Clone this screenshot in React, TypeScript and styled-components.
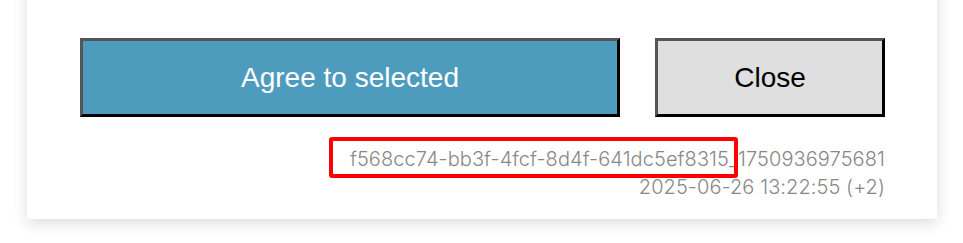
import * as React from 'react';
import styled, {createGlobalStyle} from 'styled-components';

const GlobalStyle = createGlobalStyle`
  html, body {
    margin: 0;
    padding: 0;
    background: #fff;
  }
`;

const Page = styled.div`
  width: 963px;
  height: 243px;
  overflow: hidden;
`;

const Card = styled.div`
  margin: -20px 0 0 27px;
  width: 910px;
  height: 239px;
  box-sizing: border-box;
  padding: 58px 52px 0 53px;
  background: #fff;
  box-shadow: 0 4px 14px rgba(0, 0, 0, 0.14);
`;

const Actions = styled.div`
  display: grid;
  grid-template-columns: 540px 230px;
  column-gap: 35px;
`;

// eslint-disable-next-line no-undef
const Button = styled.button<{primary?: boolean}>`
  height: 79px;
  box-sizing: border-box;
  border-style: solid;
  border-width: 3px;
  border-color: #555 #000 #000 #555;
  background: ${(props) => (props.primary ? '#4e9cbd' : '#dfdfdf')};
  color: ${(props) => (props.primary ? '#fff' : '#000')};
  font-family: "Liberation Sans", Arial, sans-serif;
  font-size: 28px;
  cursor: pointer;
`;

const Meta = styled.div`
  margin-top: 28px;
  text-align: right;
  font-family: Inter, "Noto Sans", sans-serif;
  font-weight: 300;
  font-size: 20px;
  letter-spacing: 0.08px;
  line-height: 28px;
  color: #888;
`;

const Highlight = styled.span`
  position: relative;

  &::after {
    content: '';
    position: absolute;
    left: -21px;
    right: 0;
    top: -10px;
    bottom: -7px;
    border: 4px solid #ff0000;
    border-radius: 3px;
  }
`;

export default function App() {
  return (
    <Page>
      <GlobalStyle />
      <Card>
        <Actions>
          <Button primary>Agree to selected</Button>
          <Button>Close</Button>
        </Actions>
        <Meta>
          <div>
            <Highlight>f568cc74-bb3f-4fcf-8d4f-641dc5ef8315_</Highlight>1750936975681
          </div>
          <div>2025-06-26 13:22:55 (+2)</div>
        </Meta>
      </Card>
    </Page>
  );
}
